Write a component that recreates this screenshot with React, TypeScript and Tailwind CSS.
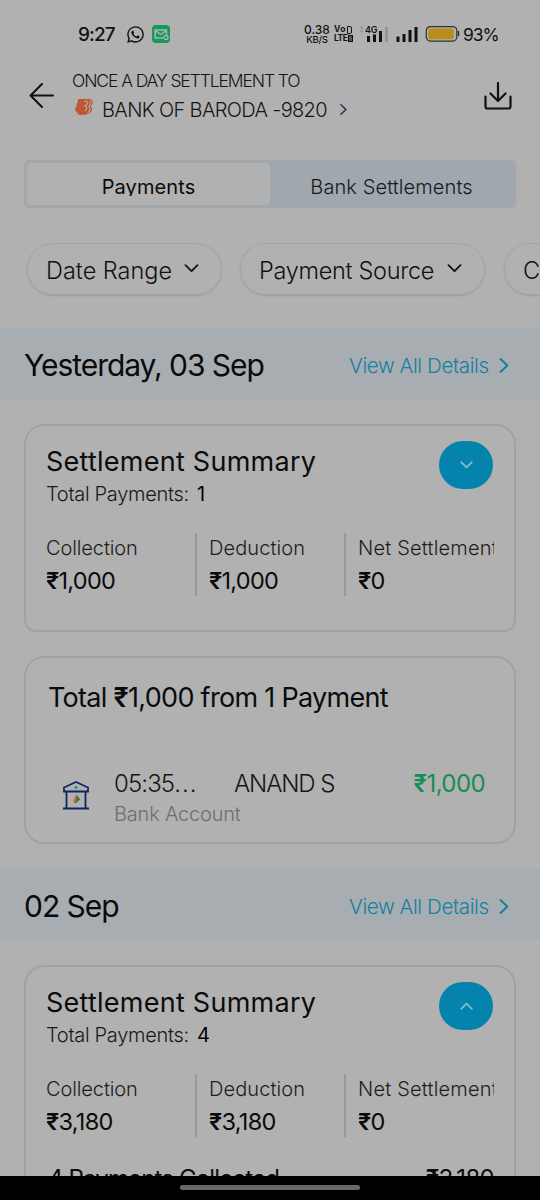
import React from 'react';
import { FaWhatsapp } from 'react-icons/fa';

interface SummaryProps {
  total: number;
  collection: string;
  deduction: string;
  open?: boolean;
  children?: React.ReactNode;
}

const ChevronDown: React.FC<{ className?: string }> = ({ className }) => (
  <svg viewBox="0 0 14 9" fill="none" stroke="currentColor" strokeWidth="1.8" strokeLinecap="round" strokeLinejoin="round" className={className}>
    <path d="M1 1.2l6 6 6-6" />
  </svg>
);

const ChevronRight: React.FC<{ className?: string }> = ({ className }) => (
  <svg viewBox="0 0 9 14" fill="none" stroke="currentColor" strokeWidth="1.8" strokeLinecap="round" strokeLinejoin="round" className={className}>
    <path d="M1.2 1l6.4 6-6.4 6" />
  </svg>
);

const StatusBar = () => (
  <div className="h-[68px] flex items-center pl-[78px] pr-[43px] text-[#111]">
    <span className="w-[48px] text-[19px] leading-none font-medium tracking-[-0.9px]">9:27</span>
    <FaWhatsapp className="w-[19px] h-[19px]" />
    <svg viewBox="0 0 18 18" className="w-[18px] h-[18px] ml-[7px]">
      <rect width="18" height="18" rx="4" fill="#139a5c" />
      <path d="M11 13H3.2V5h11.3v4.5" fill="none" stroke="#b1b1b1" strokeWidth="1.6" />
      <path d="M4 6.2l4.8 3.3 4.8-3.3" fill="none" stroke="#b1b1b1" strokeWidth="1.4" />
      <circle cx="14" cy="12.5" r="2" fill="#139a5c" stroke="#b1b1b1" strokeWidth="1.3" />
    </svg>

    <div className="ml-auto flex items-center">
      <div className="w-[26px] text-center font-medium">
        <div className="text-[12px] leading-[11px]">0.38</div>
        <div className="text-[9.5px] leading-[9px] tracking-[-0.2px]">KB/S</div>
      </div>
      <div className="ml-[4px] w-[20px] text-[8.5px] leading-[9px] font-bold">
        <div className="flex items-center tracking-[0.3px]">Vo
          <span className="ml-px w-[5px] h-[8px] border-[1.5px] border-[#111] rounded-r-[2px]"></span>
        </div>
        <div className="flex items-center tracking-[-0.5px]">LTE
          <span className="ml-px w-[5px] h-[7px] border-[1.5px] border-[#111] bg-[#555]"></span>
        </div>
      </div>
      <div className="ml-[5px] relative w-[30px] h-[18px]">
        <svg viewBox="0 0 30 18" className="w-[30px] h-[18px]">
          <path d="M.5 3.5l2-2.5 2 2.500zM.5 5.500l2 2.500 2-2.500z" fill="#929292" />
          <path d="M8 11h3v6H8zM14 9.500h3V17h-3zM20 6h3v11h-3z" fill="#111" />
          <path d="M26 2h3v15h-3z" fill="#959595" />
        </svg>
        <span className="absolute left-[6px] top-0 text-[9px] leading-[9px] font-semibold tracking-[-0.3px]">4G</span>
      </div>
      <svg viewBox="0 0 22 18" className="ml-[7px] w-[22px] h-[18px]">
        <path d="M.5 11.5h3V17h-3zM6.500 9h3v8h-3zM12.500 5h3v12h-3zM18.500 2h3v15h-3z" fill="#111" />
      </svg>
      <svg viewBox="0 0 35 18" className="ml-[7px] w-[35px] h-[18px]">
        <rect x="1.300" y="1.600" width="30.500" height="14.500" rx="4" fill="none" stroke="#303030" strokeWidth="1.200" />
        <rect x="3.200" y="3.500" width="25.500" height="10.700" rx="2" fill="#b98c1c" />
        <path d="M33.500 6v5" stroke="#303030" strokeWidth="1.400" />
      </svg>
      <span className="ml-[3px] w-[34px] whitespace-nowrap text-[17.5px] leading-[20px] pt-px tracking-[-1.1px]">93%</span>
    </div>
  </div>
);

const Header = () => (
  <div className="h-[92px] flex pl-[29px] pr-[28px]">
    <svg viewBox="0 0 26 26" fill="none" stroke="#111" strokeWidth="2" strokeLinecap="round" strokeLinejoin="round" className="w-[26px] h-[26px] mt-[14px]">
      <path d="M24 13.500H1.500M13 2L1.500 13.500 13 25" />
    </svg>
    <div className="ml-[17px]">
      <div className="h-[24px] text-[17.5px] leading-[26px] font-[350] tracking-[-1.1px] whitespace-nowrap">ONCE A DAY SETTLEMENT TO</div>
      <div className="h-[34px] flex items-center">
        <svg viewBox="0 0 20 18" className="w-[20px] h-[18px] ml-[2px] mb-[4px]">
          <path d="M4.500 1H16c4 1 3.500 6 .5 7 3.500 2 1 8-4.500 8.500L5 17l-4-5z" fill="#bd5530" />
          <path d="M10 3.500c3-1 5 .5 3 2.800L10.500 8c3 0 3 3.500 0 5M15.500 2.500c2.500 1 1.500 4.500-.7 5.700 2.200 1 1.200 5-1.300 6.500" fill="none" stroke="#b8aaa4" strokeWidth="1.100" />
          <path d="M2 10l6-7M3 13l5-6M5 15l4-4" fill="none" stroke="#b98a76" strokeWidth="0.400" />
        </svg>
        <span className="ml-[8px] w-[225px] whitespace-nowrap text-[20px] leading-[26px] pt-[2px] font-[350] tracking-[-0.65px]">BANK OF BARODA -9820</span>
        <ChevronRight className="w-[7px] h-[11px] ml-[13px] text-[#1c2c4c]" />
      </div>
    </div>
    <svg viewBox="0 0 28 28" fill="none" stroke="#111" strokeWidth="2.200" strokeLinecap="round" strokeLinejoin="round" className="ml-auto w-[28px] h-[28px] mt-[14px]">
      <path d="M14 1v18M6.500 11.500L14 19l7.500-7.500M1.500 14.500v10a2 2 0 0 0 2 2h21a2 2 0 0 0 2-2v-10" />
    </svg>
  </div>
);

const Chip: React.FC<{ label: string; className: string }> = ({ label, className }) => (
  <div className={`${className} h-[52px] shrink-0 flex items-center justify-between pl-[18px] pr-[22px] rounded-full border border-[#a5a5a5] shadow-[0_1px_2px_rgba(0,0,0,0.12)] text-[23.5px] whitespace-nowrap text-[#111]`}>
    <span className="pt-[3px] font-[350]">{label}</span>
    <ChevronDown className="w-[15px] h-[9px] mb-[2px]" />
  </div>
);

const DayHeader: React.FC<{ title: string; className: string }> = ({ title, className }) => (
  <div className={`${className} flex items-center pl-[24px] pr-[31px] bg-[#a8adb1]`}>
    <h2 className="text-[30px] leading-[40px] tracking-[-1.05px] mt-[2px] text-[#080a0c]">{title}</h2>
    <a className="ml-auto flex items-center text-[20.5px] font-[350] text-[#147fa3]">
      <span className="w-[141px] whitespace-nowrap tracking-[-0.4px] mt-[5px]">View All Details</span>
      <ChevronRight className="w-[10px] h-[15px] ml-[9px] mt-[3px]" />
    </a>
  </div>
);

const SummaryCard: React.FC<SummaryProps> = ({ total, collection, deduction, open, children }) => {
  const columns = [
    { label: 'Collection', value: collection, style: 'w-[149px] tracking-[-0.1px]' },
    { label: 'Deduction', value: deduction, style: 'w-[149px] pl-[12px] border-l-2 border-[#999] tracking-[0.1px]' },
    { label: 'Net Settlement', value: '₹0', style: 'w-[160px] pl-[12px] border-l-2 border-[#999] tracking-[0.2px]' },
  ];

  return (
    <div className={`${open ? 'h-[320px]' : 'h-[208px]'} mx-[24px] rounded-t-[20px] rounded-b-[12px] border-2 border-[#a2a2a2] pl-[20px] pr-[20px] pt-[15px]`}>
      <div className="flex justify-between h-[92px]">
        <div>
          <h3 className="h-[40px] text-[27px] leading-[42px] tracking-[0.25px] text-[#0b0b0b]">Settlement Summary</h3>
          <p className="text-[20px] leading-[26px] font-[350] tracking-[-0.3px] text-[#181818]">
            Total Payments: <span className="ml-[3px] font-normal text-black">{total}</span>
          </p>
        </div>
        <button className="w-[54px] h-[48px] mr-px rounded-[24px] bg-[#0483ad] text-[#8fbccd] flex items-center justify-center">
          <ChevronDown className={`w-[13px] h-[8px] ${open ? 'rotate-180' : ''}`} />
        </button>
      </div>
      <div className="flex overflow-hidden">
        {columns.map(c => (
          <div key={c.label} className={`${c.style} h-[63px] shrink-0 whitespace-nowrap`}>
            <div className="text-[20px] leading-[30px] font-[350] text-[#1d1d1d]">{c.label}</div>
            <div className="text-[23.500px] leading-[36px] tracking-[-0.7px] text-[#0b0b0b]">
              <span className="font-semibold">{c.value[0]}</span>{c.value.slice(1)}
            </div>
          </div>
        ))}
      </div>
      {children}
    </div>
  );
};

const BankIcon = () => (
  <svg viewBox="0 0 28 30" fill="none" stroke="#10285f" strokeWidth="1.800" className="w-[28px] h-[30px]">
    <path d="M2 11.500V7.500l12-5.500 12 5.500v4zM4.500 11v17M23.500 11v17M1 28.500h26" />
    <circle cx="14" cy="7.500" r="1.600" fill="#138fae" stroke="none" />
    <path d="M14 14.500l1.500 1-1.500 8-3-1.500z" fill="#bd6c28" stroke="none" />
    <path d="M15.500 15.500l2.500 4-4.500 4z" fill="#357438" stroke="none" />
  </svg>
);

const App: React.FC = () => {
  return (
    <div className="w-[540px] h-[1200px] overflow-hidden flex flex-col bg-[#b1b1b1] text-[#151515] font-['Inter',sans-serif]">
      <div className="flex-1 min-h-0 overflow-hidden">
        <StatusBar />
        <Header />

        {/* Tabs */}
        <div className="mx-[24px] h-[48px] p-[3px] rounded-[5px] bg-[#a0a7ad] flex text-[20px]">
          <div className="w-[243px] rounded-[5px] bg-[#b1b1b1] flex justify-center pt-[9px] text-[#0b0b0b]">
            <span className="h-[24px] leading-[30px] overflow-hidden tracking-[0.1px]">Payments</span>
          </div>
          <div className="flex-1 flex items-center justify-center pt-[5px] text-[#161a1e] font-[350] tracking-[0.1px]">Bank Settlements</div>
        </div>

        {/* Filters */}
        <div className="mt-[35px] h-[85px] pl-[27px] flex overflow-hidden">
          <Chip label="Date Range" className="w-[195px]" />
          <Chip label="Payment Source" className="w-[245px] ml-[18px] tracking-[-0.3px]" />
          <Chip label="Collection" className="w-[195px] ml-[19px] tracking-[-1.2px]" />
        </div>

        <DayHeader title="Yesterday, 03 Sep" className="h-[72px] mb-[24px]" />
        <SummaryCard total={1} collection="₹1,000" deduction="₹1,000" />

        <div className="mx-[24px] mt-[24px] mb-[25px] h-[188px] rounded-[20px] border-2 border-[#a2a2a2] pl-[22px] pr-[29px] pt-[20px]">
          <h3 className="text-[27px] leading-[40px] tracking-[-0.7px] text-[#0b0b0b]">
            Total <span className="font-semibold">₹</span>1,000 from 1 Payment
          </h3>
          <div className="flex mt-[51px]">
            <div className="pt-[11px] pl-[14px] w-[66px]"><BankIcon /></div>
            <div className="w-[120px]">
              <div className="text-[24px] leading-[30px] font-[350] tracking-[-0.9px]">05:35<span className="tracking-[1px]">...</span></div>
              <div className="text-[20px] leading-[30px] font-[350] tracking-[-0.2px] whitespace-nowrap text-[#6e6e6e]">Bank Account</div>
            </div>
            <div className="text-[24px] leading-[30px] font-[350] tracking-[-1.1px]">ANAND S</div>
            <div className="ml-auto text-[24px] leading-[30px] tracking-[-0.6px] text-[#168d53]"><span className="font-semibold">₹</span>1,000</div>
          </div>
        </div>

        <DayHeader title="02 Sep" className="h-[71px] mb-[25px]" />
        <SummaryCard total={4} collection="₹3,180" deduction="₹3,180" open>
          <div className="mt-[24px] flex justify-between text-[24px] leading-[36px] text-[#0b0b0b]">
            <span className="pl-[2px] tracking-[-0.85px]">4 Payments Collected</span>
            <span className="tracking-[-0.7px]"><span className="font-semibold">₹</span>3,180</span>
          </div>
        </SummaryCard>
      </div>

      {/* Gesture bar */}
      <div className="h-[24px] bg-black flex justify-center pt-[9px]">
        <div className="w-[180px] h-[5px] rounded-full bg-[#686868]"></div>
      </div>
    </div>
  );
};

export default App;
